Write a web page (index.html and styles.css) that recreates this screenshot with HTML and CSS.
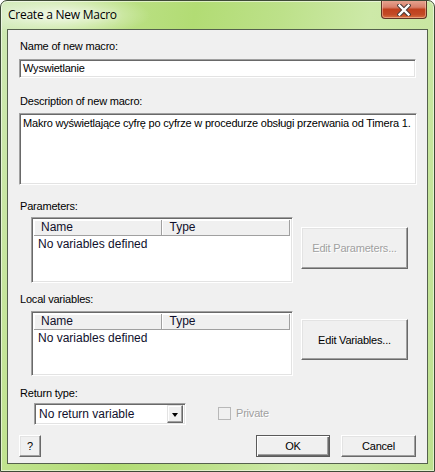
FILE: index.html
```html
<!DOCTYPE html>
<html>
<head>
<meta charset="utf-8">
<title>Create a New Macro</title>
<link rel="stylesheet" href="styles.css">
</head>
<body>
<div class="window">
  <div class="titlebar">
    <span class="title">Create a New Macro</span>
    <div class="close">
      <svg width="14" height="12" viewBox="0 0 14 12">
        <path d="M2.5 1.5 L11.5 10.5 M11.5 1.5 L2.5 10.5" stroke="#4a3a36" stroke-width="4.4" stroke-linecap="square"/>
        <path d="M2.5 1.5 L11.5 10.5 M11.5 1.5 L2.5 10.5" stroke="#ffffff" stroke-width="2.4" stroke-linecap="square"/>
      </svg>
    </div>
  </div>
  <div class="client">
    <div class="lbl lbl-name">Name of new macro:</div>
    <div class="textbox">Wyswietlanie</div>
    <div class="lbl lbl-desc">Description of new macro:</div>
    <div class="textarea">Makro wyświetlające cyfrę po cyfrze w procedurze obsługi przerwania od Timera 1.</div>

    <div class="lbl lbl-params">Parameters:</div>
    <div class="list-row list-row-params">
      <div class="listview">
        <div class="lv-header">
          <div class="lv-col lv-name">Name</div>
          <div class="lv-col lv-type">Type</div>
          <div class="lv-fill"></div>
        </div>
        <div class="lv-empty">No variables defined</div>
      </div>
      <div class="btn btn-side btn-params disabled">Edit Parameters...</div>
    </div>

    <div class="lbl lbl-locals">Local variables:</div>
    <div class="list-row list-row-locals">
      <div class="listview">
        <div class="lv-header">
          <div class="lv-col lv-name">Name</div>
          <div class="lv-col lv-type">Type</div>
          <div class="lv-fill"></div>
        </div>
        <div class="lv-empty">No variables defined</div>
      </div>
      <div class="btn btn-side btn-locals">Edit Variables...</div>
    </div>

    <div class="lbl lbl-ret">Return type:</div>
    <div class="ret-row">
      <div class="combo">
        <span class="combo-text">No return variable</span>
        <div class="combo-btn"><span class="tri"></span></div>
      </div>
      <div class="check">
        <span class="check-box"></span>
        <span class="check-label">Private</span>
      </div>
    </div>

    <div class="btn-row">
      <div class="btn btn-help">?</div>
      <div class="btn-spacer"></div>
      <div class="btn btn-ok">OK</div>
      <div class="btn btn-cancel">Cancel</div>
    </div>
  </div>
</div>
</body>
</html>
```

FILE: styles.css
```css
html, body {
  margin: 0;
  padding: 0;
  background: #ffffff;
}

.window {
  width: 435px;
  height: 472px;
  box-sizing: border-box;
  border: 1px solid #3e4a36;
  border-radius: 7px 7px 0 0;
  padding: 0 6px 7px 6px;
  display: flex;
  flex-direction: column;
  background:
    radial-gradient(ellipse 90px 22px at 60px 14px, rgba(255,255,255,0.75), rgba(255,255,255,0) 100%),
    linear-gradient(100deg, #cfe9b5 0%, #bfe28c 18%, #b2dc74 38%, #bde18a 55%, #cde9a8 72%, #c9e7a2 84%, #bde08e 100%);
  box-shadow: inset 0 0 0 1px rgba(255,255,255,0.55);
  overflow: hidden;
}

.titlebar {
  height: 28px;
  flex: none;
  display: flex;
  justify-content: space-between;
  align-items: flex-start;
}

.title {
  margin-top: 5px;
  padding-left: 1px;
  font-family: "Open Sans", "Noto Sans", sans-serif;
  font-size: 12px;
  line-height: 17px;
  letter-spacing: -0.25px;
  color: #000;
  text-shadow: 0 0 6px rgba(255,255,255,0.9);
}

.close {
  width: 46px;
  height: 19px;
  box-sizing: border-box;
  margin-top: -1px;
  margin-right: 1px;
  border: 1px solid #5e3426;
  border-top: none;
  border-radius: 0 0 4px 4px;
  background: linear-gradient(to bottom, #e8a894 0%, #d9806a 40%, #c0401d 52%, #c24a26 80%, #d9703f 100%);
  box-shadow: inset 0 0 0 1px rgba(255,220,200,0.45);
  display: flex;
  align-items: center;
  justify-content: center;
}

.close svg {
  display: block;
  margin-top: 1px;
}

.client {
  flex: 1;
  background: #f0f0f0;
  border: 1px solid #55614d;
  padding: 10px 10px 0 11px;
  display: flex;
  flex-direction: column;
  font-family: "Liberation Sans", Arial, sans-serif;
  font-size: 11px;
  letter-spacing: -0.2px;
  color: #000;
}

.lbl {
  height: 13px;
  line-height: 13px;
  padding-left: 1px;
  white-space: nowrap;
}

.lbl-desc { margin-top: 17px; }
.lbl-params { margin-top: 15px; }
.lbl-locals { margin-top: 10px; }
.lbl-ret { margin-top: 11px; }

/* sunken edit controls */
.textbox, .textarea, .listview, .combo {
  box-sizing: border-box;
  background: #ffffff;
  border: 1px solid;
  border-color: #a0a0a0 #ffffff #ffffff #a0a0a0;
  box-shadow: inset 1px 1px 0 #696969, inset -1px -1px 0 #e3e3e3;
}

.textbox {
  margin-top: 6px;
  height: 19px;
  width: 397px;
  padding: 1px 0 0 3px;
  line-height: 15px;
  white-space: nowrap;
}

.textarea {
  margin-top: 5px;
  height: 72px;
  width: 398px;
  padding: 3px 0 0 3px;
  line-height: 13px;
  white-space: nowrap;
  overflow: hidden;
}

.list-row {
  display: flex;
  align-items: flex-start;
}

.list-row-params { margin-top: 4px; }
.list-row-locals { margin-top: 5px; }

.listview {
  margin-left: 12px;
  width: 262px;
  height: 66px;
  padding: 2px;
  display: flex;
  flex-direction: column;
  letter-spacing: 0;
}

.list-row-locals .listview { height: 65px; }

.lv-header {
  display: flex;
  height: 16px;
  flex: none;
  font-family: "Liberation Sans", Arial, sans-serif;
  font-size: 12px;
  line-height: 15px;
  color: #10102c;
}

.lv-col {
  box-sizing: border-box;
  height: 16px;
  background: #f0f0f0;
  border-right: 1px solid #a0a0a0;
  border-bottom: 1px solid #a0a0a0;
  box-shadow: inset 1px 1px 0 #ffffff;
  padding-left: 7px;
  white-space: nowrap;
}

.lv-name { width: 128px; }
.lv-type { width: 129px; padding-left: 8px; }

.lv-fill {
  flex: 1;
  height: 16px;
  box-sizing: border-box;
  background: #f0f0f0;
  border-bottom: 1px solid #a0a0a0;
}

.lv-empty {
  margin-top: 1px;
  padding-left: 4px;
  font-family: "Liberation Sans", Arial, sans-serif;
  font-size: 12px;
  line-height: 15px;
  color: #10102c;
  white-space: nowrap;
}

/* classic raised buttons */
.btn {
  box-sizing: border-box;
  background: #f0f0f0;
  border: 1px solid;
  border-color: #ffffff #696969 #696969 #ffffff;
  box-shadow: inset -1px -1px 0 #a0a0a0, inset 1px 1px 0 #e3e3e3;
  display: flex;
  align-items: center;
  justify-content: center;
  white-space: nowrap;
  color: #000;
}

.btn-side {
  margin-left: 8px;
  width: 107px;
}

.btn-params { margin-top: 10px; height: 42px; }
.btn-locals { margin-top: 8px; height: 41px; }

.disabled {
  color: #a0a0a0;
  text-shadow: 1px 1px 0 #ffffff;
}

.ret-row {
  margin-top: 3px;
  display: flex;
  align-items: flex-start;
  height: 22px;
}

.combo {
  margin-left: 15px;
  width: 152px;
  height: 22px;
  display: flex;
  align-items: center;
  padding: 2px;
  letter-spacing: 0;
}

.combo-text {
  flex: 1;
  padding-left: 2px;
  font-size: 12px;
  line-height: 15px;
  color: #10102c;
  white-space: nowrap;
}

.combo-btn {
  width: 16px;
  height: 18px;
  box-sizing: border-box;
  background: #f0f0f0;
  border: 1px solid;
  border-color: #e3e3e3 #696969 #696969 #e3e3e3;
  box-shadow: inset -1px -1px 0 #a0a0a0, inset 1px 1px 0 #ffffff;
  display: flex;
  align-items: center;
  justify-content: center;
}

.tri {
  width: 0;
  height: 0;
  border-left: 3.5px solid transparent;
  border-right: 3.5px solid transparent;
  border-top: 4px solid #000;
  margin-top: 1px;
}

.check {
  margin-left: 32px;
  margin-top: 3px;
  display: flex;
  align-items: center;
  height: 14px;
}

.check-box {
  width: 13px;
  height: 13px;
  box-sizing: border-box;
  border: 1px solid #b8b8b8;
  background: #f0f0f0;
}

.check-label {
  margin-left: 5px;
  color: #a0a0a0;
  text-shadow: 1px 1px 0 #ffffff;
  line-height: 13px;
}

.btn-row {
  margin-top: 10px;
  display: flex;
  height: 22px;
}

.btn-help { width: 22px; height: 22px; }
.btn-spacer { flex: 1; }
.btn-ok {
  width: 74px;
  height: 22px;
  border: 1px solid #5a5a5a;
  box-shadow: inset 1px 1px 0 #ffffff, inset -1px -1px 0 #696969, inset -2px -2px 0 #a0a0a0;
}
.btn-cancel { width: 75px; height: 22px; margin-left: 11px; margin-right: 1px; }
```
